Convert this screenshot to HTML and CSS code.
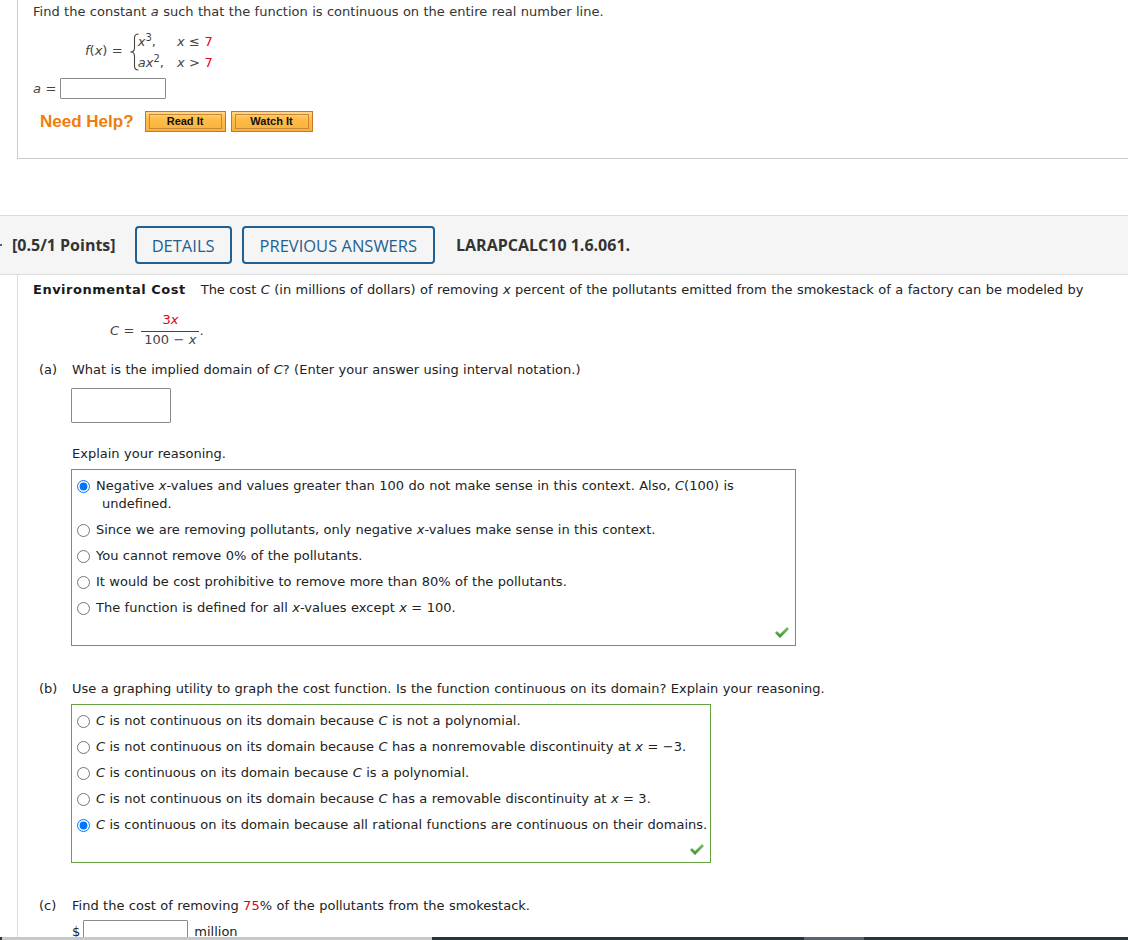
FILE: index.html
```html
<!DOCTYPE html>
<html>
<head>
<meta charset="utf-8">
<link rel="stylesheet" href="styles.css">
</head>
<body>
<div class="prev">
  <p class="q">Find the constant <i>a</i> such that the function is continuous on the entire real number line.</p>
  <div class="piece">
    <span class="fx"><i>f</i>(<i>x</i>) =</span>
    <svg class="brace" width="10" height="38" viewBox="0 0 10 38"><path d="M9.5 1 Q5.5 1 5.5 5 L5.5 15 Q5.5 19 1.5 19 Q5.5 19 5.5 23 L5.5 33 Q5.5 37 9.5 37" fill="none" stroke="#444" stroke-width="1.1"/></svg>
    <div class="cases">
      <span><i>x</i><sup>3</sup>,</span><span><i>x</i> ≤ <span class="red">7</span></span>
      <span><i>ax</i><sup>2</sup>,</span><span><i>x</i> &gt; <span class="red">7</span></span>
    </div>
  </div>
  <div class="arow"><span><i>a</i> =</span><span class="inp inp-a"></span></div>
  <div class="help">
    <span class="need">Need Help?</span>
    <span class="hbtn hb-read"><span>Read It</span></span>
    <span class="hbtn hb-watch"><span>Watch It</span></span>
  </div>
</div>

<div class="bar">
  <span class="mark"></span>
  <span class="pts">[0.5/1 Points]</span>
  <span class="obtn obtn1">DETAILS</span>
  <span class="obtn obtn2">PREVIOUS ANSWERS</span>
  <span class="code">LARAPCALC10 1.6.061.</span>
</div>

<div class="qbody">
  <p class="intro"><b>Environmental Cost</b>The cost <i>C</i> (in millions of dollars) of removing <i>x</i> percent of the pollutants emitted from the smokestack of a factory can be modeled by</p>
  <div class="frow">
    <span><i>C</i> =</span>
    <span class="frac"><span class="num red">3<i>x</i></span><span class="fbar"></span><span class="den">100 − <i>x</i></span></span>
    <span class="dot">.</span>
  </div>

  <div class="part pa"><span class="lbl">(a)</span><span>What is the implied domain of <i>C</i>? (Enter your answer using interval notation.)</span></div>
  <div class="inp inp-dom"></div>
  <p class="explain">Explain your reasoning.</p>
  <div class="box box-a">
    <label class="opt"><input type="radio" name="a" checked><span class="t"><span class="ln">Negative <i>x</i>-values and values greater than 100 do not make sense in this context. Also, <i>C</i>(100) is</span><span class="ln ln2">undefined.</span></span></label>
    <label class="opt"><input type="radio" name="a"><span class="t">Since we are removing pollutants, only negative <i>x</i>-values make sense in this context.</span></label>
    <label class="opt"><input type="radio" name="a"><span class="t">You cannot remove 0% of the pollutants.</span></label>
    <label class="opt"><input type="radio" name="a"><span class="t">It would be cost prohibitive to remove more than 80% of the pollutants.</span></label>
    <label class="opt"><input type="radio" name="a"><span class="t">The function is defined for all <i>x</i>-values except <i>x</i> = 100.</span></label>
    <div class="chk"><svg width="14" height="11" viewBox="0 0 14 11"><defs><linearGradient id="g1" x1="0" y1="0" x2="0" y2="1"><stop offset="0" stop-color="#7cc766"/><stop offset="1" stop-color="#3f8f2c"/></linearGradient></defs><polygon points="0,6 2,4 5,7 12,0 14,2 5,11" fill="url(#g1)"/></svg></div>
  </div>

  <div class="part pb"><span class="lbl">(b)</span><span>Use a graphing utility to graph the cost function. Is the function continuous on its domain? Explain your reasoning.</span></div>
  <div class="box box-b">
    <label class="opt"><input type="radio" name="b"><span class="t"><i>C</i> is not continuous on its domain because <i>C</i> is not a polynomial.</span></label>
    <label class="opt"><input type="radio" name="b"><span class="t"><i>C</i> is not continuous on its domain because <i>C</i> has a nonremovable discontinuity at <i>x</i> = −3.</span></label>
    <label class="opt"><input type="radio" name="b"><span class="t"><i>C</i> is continuous on its domain because <i>C</i> is a polynomial.</span></label>
    <label class="opt"><input type="radio" name="b"><span class="t"><i>C</i> is not continuous on its domain because <i>C</i> has a removable discontinuity at <i>x</i> = 3.</span></label>
    <label class="opt"><input type="radio" name="b" checked><span class="t"><i>C</i> is continuous on its domain because all rational functions are continuous on their domains.</span></label>
    <div class="chk"><svg width="14" height="11" viewBox="0 0 14 11"><defs><linearGradient id="g2" x1="0" y1="0" x2="0" y2="1"><stop offset="0" stop-color="#7cc766"/><stop offset="1" stop-color="#3f8f2c"/></linearGradient></defs><polygon points="0,6 2,4 5,7 12,0 14,2 5,11" fill="url(#g2)"/></svg></div>
  </div>

  <div class="part pc"><span class="lbl">(c)</span><span>Find the cost of removing <span class="red">75</span>% of the pollutants from the smokestack.</span></div>
  <div class="money"><span>$</span><span class="inp inp-m"></span><span>million</span></div>
</div>

<div class="scroll"></div>
</body>
</html>
```

FILE: styles.css
```css
* { box-sizing: border-box; }
html, body { margin: 0; padding: 0; background: #fff; }
body {
  font-family: "DejaVu Sans", Verdana, sans-serif;
  font-size: 13px;
  color: #333;
  word-spacing: 0.3px;
  width: 1128px;
  height: 940px;
  overflow: hidden;
  position: relative;
}
p { margin: 0; }
.red { color: #e2001a; }

.prev {
  margin-left: 17px;
  border-left: 1px solid #ccc;
  border-bottom: 1px solid #ccc;
  height: 159px;
  padding: 4px 0 0 15px;
}
.q { line-height: 16px; }
.piece {
  display: flex;
  align-items: center;
  height: 42px;
  margin: 11px 0 0 52px;
  color: #444;
}
.fx { margin-right: 6px; margin-top: -3px; }
.brace { display: block; }
.cases {
  display: grid;
  grid-template-columns: auto auto;
  column-gap: 13px;
  line-height: 21px;
  margin-left: -1px;
}
sup { font-size: 10px; vertical-align: 5px; line-height: 0; }

.arow {
  display: flex;
  align-items: center;
  gap: 4px;
  height: 22px;
  margin-top: 4px;
  color: #444;
}
.inp { display: block; border: 1px solid #8a8a8a; border-radius: 1px; background: #fff; }
.inp-a { width: 106px; height: 21px; }

.help {
  display: flex;
  align-items: center;
  height: 22px;
  margin-top: 11px;
  padding-left: 7px;
}
.need {
  font-family: "Liberation Sans", Arial, sans-serif;
  font-weight: 700;
  font-size: 17px;
  color: #ef7d0b;
  margin-right: 11px;
  margin-top: 1px;
  word-spacing: 0;
}
.hbtn {
  display: block;
  height: 21px;
  border: 1px solid #c4772b;
  background: linear-gradient(#ffd98c 0%, #ffbd4b 35%, #fbb03a 100%);
  padding: 2px 3px;
}
.hbtn > span {
  display: block;
  height: 15px;
  border: 1px solid #cd8636;
  font-family: "Liberation Sans", Arial, sans-serif;
  font-weight: 700;
  font-size: 11px;
  line-height: 13px;
  text-align: center;
  color: #111;
  word-spacing: 0;
}
.hb-read { width: 81px; margin-right: 5px; }
.hb-watch { width: 82px; }

.bar {
  position: relative;
  margin-top: 56px;
  height: 60px;
  background: #f5f5f5;
  border-top: 1px solid #dcdcdc;
  border-bottom: 1px solid #dcdcdc;
  display: flex;
  align-items: center;
  padding-left: 12px;
  font-family: "Open Sans", "Noto Sans", sans-serif;
  font-size: 16px;
  word-spacing: 0;
}
.mark { position: absolute; left: 0; top: 28px; width: 2px; height: 2px; background: #2d6aa0; }
.pts { font-weight: 700; color: #333; margin-right: 19px; }
.obtn {
  display: flex;
  align-items: center;
  height: 38px;
  border: 2px solid #1f6196;
  border-radius: 4px;
  color: #1f5f95;
  font-size: 16.5px;
  margin-right: 10px;
}
.obtn1 { padding: 0 15px; }
.obtn2 { padding: 0 16px; margin-right: 21px; }
.code { font-weight: 700; color: #333; }

.qbody {
  margin-left: 17px;
  border-left: 1px solid #ddd;
  padding: 6px 0 0 15px;
  height: 665px;
}
.intro { line-height: 18px; color: #222; }
.intro b { letter-spacing: 0.5px; margin-right: 15px; color: #1a1a1a; word-spacing: 0; }

.frow {
  display: flex;
  align-items: center;
  margin: 13px 0 0 77px;
  color: #444;
}
.frac {
  display: flex;
  flex-direction: column;
  align-items: center;
  width: 58px;
  margin-left: 7px;
  line-height: 16px;
}
.fbar { display: block; width: 58px; border-top: 1px solid #444; margin-top: 3px; }
.dot { line-height: 16px; margin-top: 2px; }

.part { display: flex; line-height: 18px; color: #222; }
.lbl { width: 39px; padding-left: 6px; flex: none; }
.pa { margin-top: 13px; }
.pb { margin-top: 34px; }
.pc { margin-top: 34px; }

.inp-dom { width: 100px; height: 35px; margin: 9px 0 0 38px; }
.explain { margin: 22px 0 0 39px; line-height: 18px; color: #222; }

.box {
  margin: 6px 0 0 38px;
  border: 1px solid #69a042;
  padding-top: 7px;
  display: flex;
  flex-direction: column;
  gap: 8px;
  color: #222;
}
.box-a { width: 725px; }
.box-b { width: 640px; }
.box-b .t { white-space: nowrap; }
.opt { display: flex; align-items: flex-start; line-height: 18px; }
.opt input { margin: 3px 6px 0 5px; width: 13px; height: 13px; flex: none; }
.t { display: block; }
.ln { display: block; white-space: nowrap; }
.ln2 { padding-left: 6px; }
.chk {
  height: 28px;
  margin-top: -8px;
  display: flex;
  justify-content: flex-end;
  align-items: flex-end;
  padding: 0 6px 7px 0;
}
.chk svg { display: block; }

.money {
  display: flex;
  align-items: center;
  height: 22px;
  margin: 5px 0 0 39px;
  color: #222;
}
.inp-m { width: 105px; height: 22px; margin: 0 6px 0 3px; }

.scroll {
  position: fixed;
  left: 0;
  bottom: 0;
  width: 1128px;
  height: 3px;
  background: linear-gradient(to right, #263640 0 2px, #c8c8c8 2px 432px, #25363f 432px 804px, #5b666c 804px 864px, #25363f 864px);
}
```
